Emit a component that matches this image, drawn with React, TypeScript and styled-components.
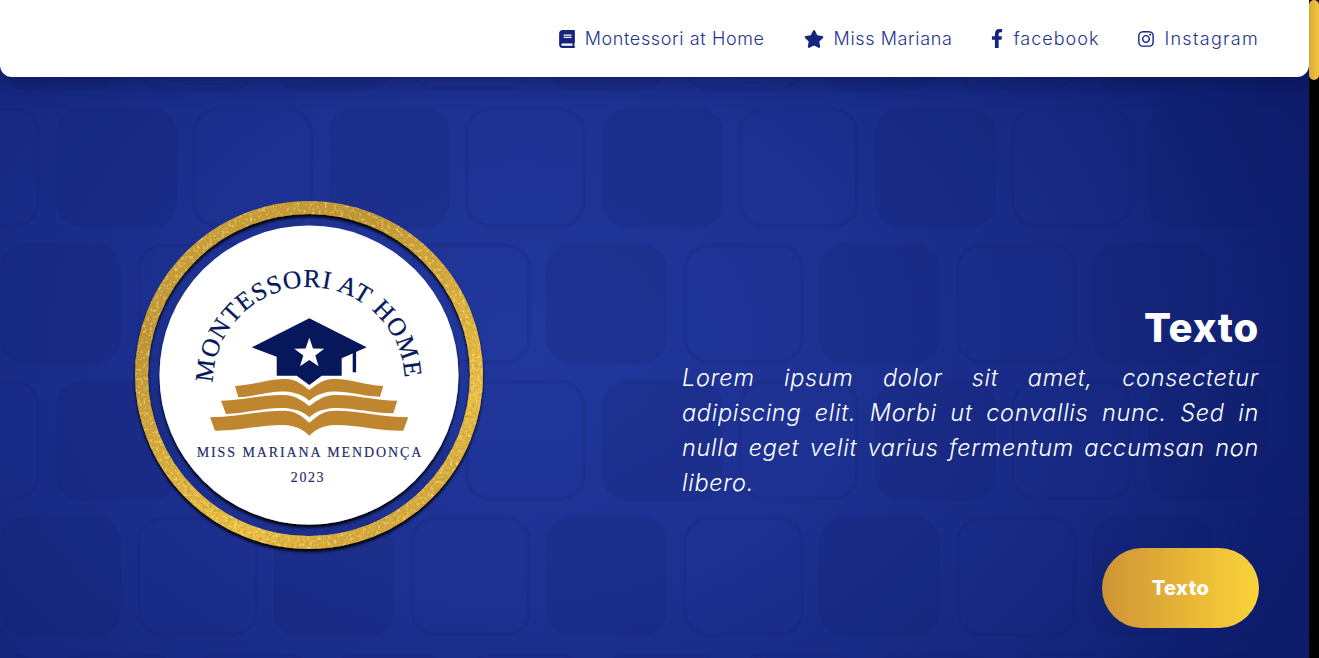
import React from "react";
import styled, { createGlobalStyle } from "styled-components";
import { FaBook, FaStar, FaFacebookF, FaInstagram } from "react-icons/fa";

const GlobalStyle = createGlobalStyle`
    html, body {
        margin: 0;
        padding: 0;
        height: 100%;
        overflow: hidden;
        background: #000;
    }
    * {
        box-sizing: border-box;
    }
`;

const Page = styled.div`
    display: flex;
    width: 1319px;
    height: 658px;
    font-family: "Inter", "Liberation Sans", sans-serif;
`;

const Main = styled.main`
    position: relative;
    flex: 1;
    display: flex;
    flex-direction: column;
    overflow: hidden;
    background: radial-gradient(
        ellipse 830px 630px at 520px 340px,
        #21379c 0%,
        #1d3192 40%,
        #15277f 75%,
        #0d1c6b 100%
    );
`;

const ScrollTrack = styled.div`
    width: 10px;
    background: #000;
`;

const ScrollThumb = styled.div`
    height: 80px;
    border-radius: 5px;
    background: linear-gradient(90deg, #d9a836, #f4c63c);
`;

const PatternLayer = styled.svg`
    position: absolute;
    inset: 0;
    width: 100%;
    height: 100%;
`;

const Header = styled.header`
    position: relative;
    z-index: 2;
    display: flex;
    align-items: center;
    justify-content: flex-end;
    gap: 39px;
    height: 77px;
    padding-right: 50px;
    background: #fff;
    border-radius: 0 0 12px 12px;
    box-shadow: 0 5px 22px rgba(8, 14, 60, 0.45);
`;

const NavItem = styled.a<{ $tracking: number; $iconWidth: number; $iconHeight: number }>`
    display: flex;
    align-items: center;
    gap: 10px;
    font-size: 18px;
    font-weight: 300;
    letter-spacing: ${(props) => props.$tracking}px;
    color: #24348f;
    text-decoration: none;

    svg {
        width: ${(props) => props.$iconWidth}px;
        height: ${(props) => props.$iconHeight}px;
        color: #14247f;
        flex-shrink: 0;
    }
`;

const Hero = styled.section`
    position: relative;
    z-index: 1;
    flex: 1;
    display: grid;
    grid-template-columns: 618px 1fr;
    column-gap: 64px;
    padding-right: 50px;
`;

const LogoColumn = styled.div`
    display: flex;
    justify-content: center;
    padding-top: 118px;
`;

const TextColumn = styled.div`
    display: flex;
    flex-direction: column;
    align-items: flex-end;
    padding-top: 226px;
`;

const Title = styled.h1`
    margin: 0 0 7px;
    font-size: 40px;
    font-weight: 800;
    line-height: 50px;
    letter-spacing: 0.8px;
    color: #fff;
`;

const Body = styled.p`
    margin: 0;
    width: 100%;
    font-size: 23.5px;
    font-weight: 300;
    font-style: italic;
    line-height: 35px;
    letter-spacing: 0.7px;
    text-align: justify;
    color: #fff;
`;

const CtaButton = styled.button`
    width: 157px;
    height: 80px;
    margin-top: 48px;
    border: 0;
    border-radius: 40px;
    background: linear-gradient(90deg, #cf9436, #fbd338);
    font-family: inherit;
    font-size: 20px;
    font-weight: 800;
    letter-spacing: 0.4px;
    color: #fff;
`;

const navItems = [
    { label: "Montessori at Home", icon: <FaBook />, tracking: 0.62, iconWidth: 16, iconHeight: 18 },
    { label: "Miss Mariana", icon: <FaStar />, tracking: 0.62, iconWidth: 20, iconHeight: 18 },
    { label: "facebook", icon: <FaFacebookF />, tracking: 1, iconWidth: 12, iconHeight: 19 },
    { label: "Instagram", icon: <FaInstagram />, tracking: 1.3, iconWidth: 16, iconHeight: 18 },
];

const Pattern: React.FC = () => (
    <PatternLayer aria-hidden="true">
        <defs>
            <pattern
                id="tiles"
                width="273"
                height="273"
                patternUnits="userSpaceOnUse"
                x="0"
                y="-30"
            >
                <g fill="#0c1a5e" fillOpacity="0.15">
                    <rect x="0" y="0" width="121" height="121" rx="26" />
                    <rect x="56" y="137" width="121" height="121" rx="26" />
                </g>
                <g fill="none" stroke="#0c1a5e" strokeOpacity="0.13" strokeWidth="4">
                    <rect x="139" y="2" width="117" height="117" rx="24" />
                    <rect x="194" y="139" width="117" height="117" rx="24" />
                    <rect x="-79" y="139" width="117" height="117" rx="24" />
                </g>
            </pattern>
        </defs>
        <rect width="100%" height="100%" fill="url(#tiles)" />
    </PatternLayer>
);

const NAVY = "#06175c";
const GOLD = "#c0862f";
const BOOK_LAYERS = [
    "M235 386 C255 385 270 378 287 379 C298 380 304 386 309.3 390 C315 386 321 380 332 379 C349 378 364 385 383.3 386 L380 396.7 C362 396 348 391 333 391.5 C322 392 315 396 309.3 400.7 C304 396 296 392 285 391.5 C270 391 256 396 238.3 397.3 Z",
    "M221 400.7 C245 400 265 394 285 395 C297 396 304 402 309.3 406 C315 402 322 396 333.3 395 C353 394 373 400 397.3 400.7 L393.3 413.3 C372 413 350 407 333.3 408 C322 409 315 412 309.3 417.3 C304 412 296 409 285 408 C268 407 247 413 226 414 Z",
    "M210 417.3 C238 417 262 410 285 410.7 C297 411 304 418 309.3 422.7 C315 418 322 411 333.3 410.7 C356 410 380 417 408.3 417.3 L403.3 430.7 C378 431 354 424 333.3 425 C322 426 315 430 309.3 435.7 C304 430 296 426 285 425 C264 424 241 431 215 430.7 Z",
];

const Logo: React.FC = () => (
    <svg width="360" height="360" viewBox="129 195 360 360" role="img">
        <defs>
            <linearGradient id="gold" x1="0" y1="0" x2="0.6" y2="1">
                <stop offset="0%" stopColor="#d6a833" />
                <stop offset="30%" stopColor="#bf912b" />
                <stop offset="60%" stopColor="#dcae35" />
                <stop offset="85%" stopColor="#efc23e" />
                <stop offset="100%" stopColor="#d8a935" />
            </linearGradient>
            <filter id="foil" x="-5%" y="-5%" width="110%" height="110%">
                <feTurbulence type="fractalNoise" baseFrequency="0.32" numOctaves="3" seed="4" result="noise" />
                <feColorMatrix
                    in="noise"
                    type="matrix"
                    values="0 0 0 0 0.5  0 0 0 0 0.34  0 0 0 0 0.06  0 0 0 2.4 -1.05"
                    result="dark"
                />
                <feColorMatrix
                    in="noise"
                    type="matrix"
                    values="0 0 0 0 1  0 0 0 0 0.84  0 0 0 0 0.36  1.8 0 0 0 -0.95"
                    result="light"
                />
                <feMerge result="specks">
                    <feMergeNode in="dark" />
                    <feMergeNode in="light" />
                </feMerge>
                <feComposite in="specks" in2="SourceAlpha" operator="in" result="clipped" />
                <feMerge>
                    <feMergeNode in="SourceGraphic" />
                    <feMergeNode in="clipped" />
                </feMerge>
            </filter>
            <filter id="lift" x="-5%" y="-5%" width="110%" height="110%">
                <feDropShadow dx="0" dy="3" stdDeviation="1.6" floodColor="#000" floodOpacity="0.95" />
            </filter>
            <path id="arc" d="M213 383 A96 96 0 0 1 405 383" />
        </defs>

        <g filter="url(#lift)">
            <circle cx="309" cy="375" r="167.5" fill="none" stroke="url(#gold)" strokeWidth="13" filter="url(#foil)" />
        </g>
        <circle cx="309" cy="375" r="149.5" fill="#fff" filter="url(#lift)" />

        <text
            fontFamily="'Liberation Serif', serif"
            fontSize="25.5"
            letterSpacing="0.9"
            fill={NAVY}
            stroke={NAVY}
            strokeWidth="0.25"
            textAnchor="middle"
        >
            <textPath href="#arc" startOffset="49.3%">
                MONTESSORI AT HOME
            </textPath>
        </text>

        <path
            fill={NAVY}
            d="M309.3 318.3 L366.7 347.3 L341.7 358.3 V375.7 H321.7 L309.3 385 L296.7 375.7 H276.7 V356.7 L251.7 347.3 Z"
        />
        <rect x="352.7" y="351.7" width="3.4" height="20.6" fill={NAVY} />
        <polygon
            fill="#fff"
            points="309.3,337.8 313,348.5 324.3,348.7 315.3,355.5 318.6,366.3 309.3,359.9 300,366.3 303.3,355.5 294.3,348.7 305.6,348.5"
        />

        {BOOK_LAYERS.map((d) => (
            <path key={d} d={d} fill={GOLD} />
        ))}

        <text
            x="310"
            y="457"
            fontFamily="'Liberation Serif', serif"
            fontSize="14"
            letterSpacing="1.9"
            fill="#1e2a6b"
            stroke="#1e2a6b"
            strokeWidth="0.15"
            textAnchor="middle"
        >
            MISS MARIANA MENDONÇA
        </text>
        <text
            x="308"
            y="482"
            fontFamily="'Liberation Serif', serif"
            fontSize="14"
            letterSpacing="1.6"
            fill="#1e2a6b"
            stroke="#1e2a6b"
            strokeWidth="0.15"
            textAnchor="middle"
        >
            2023
        </text>
    </svg>
);

export default function App() {
    return (
        <Page>
            <GlobalStyle />
            <Main>
                <Pattern />
                <Header>
                    {navItems.map((item) => (
                        <NavItem
                            key={item.label}
                            href="#"
                            $tracking={item.tracking}
                            $iconWidth={item.iconWidth}
                            $iconHeight={item.iconHeight}
                        >
                            {item.icon}
                            {item.label}
                        </NavItem>
                    ))}
                </Header>
                <Hero>
                    <LogoColumn>
                        <Logo />
                    </LogoColumn>
                    <TextColumn>
                        <Title>Texto</Title>
                        <Body>
                            Lorem ipsum dolor sit amet, consectetur adipiscing elit. Morbi ut
                            convallis nunc. Sed in nulla eget velit varius fermentum accumsan
                            non libero.
                        </Body>
                        <CtaButton>Texto</CtaButton>
                    </TextColumn>
                </Hero>
            </Main>
            <ScrollTrack>
                <ScrollThumb />
            </ScrollTrack>
        </Page>
    );
}
